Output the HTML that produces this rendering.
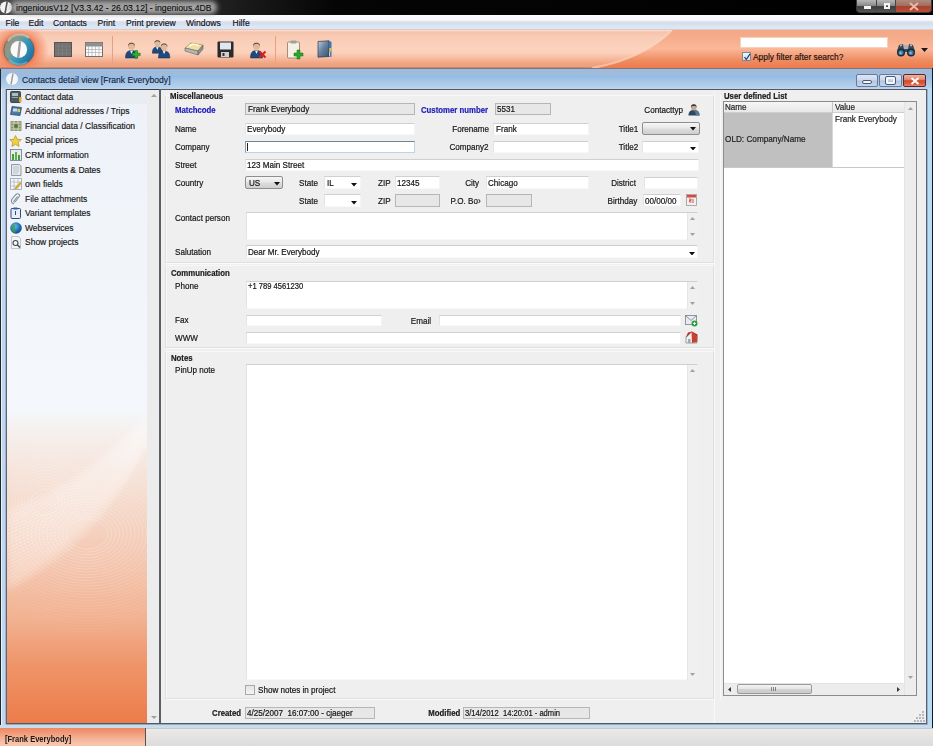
<!DOCTYPE html>
<html><head><meta charset="utf-8">
<style>
*{margin:0;padding:0;box-sizing:border-box}
html,body{width:933px;height:746px;overflow:hidden;background:#efefef}
body{position:relative;font-family:"Liberation Sans",sans-serif;font-size:8.5px;color:#222}
.a{position:absolute}
.t{position:absolute;white-space:nowrap;line-height:10px}
#title{left:0;top:0;width:933px;height:15px;background:linear-gradient(90deg,#4a4a4a 0%,#3a3a3a 15%,#1a1a1a 26%,#050505 36%,#000 100%)}
#menu{left:0;top:15px;width:933px;height:15px;background:linear-gradient(180deg,#fbfcfe 0%,#f6f8fc 35%,#d8e0ec 45%,#d6dfeb 62%,#dae6f6 72%,#dde9fa 100%)}
#tb{left:0;top:29px;width:933px;height:40px;background:linear-gradient(180deg,#c9aeae 0px,#f9e2d9 1px,#f6c3ab 3px,#f9ccb6 8px,#fcd3be 20px,#fbd0ba 24px,#f6b89b 30px,#f0a27e 35px,#f09f7b 38px,#8f7575 39px)}
#mdi{left:0;top:68px;width:933px;height:660px;background:#c2d6f0;border-top:1px solid #7c7788}
#mdit{left:0;top:69px;width:933px;height:20px;background:linear-gradient(180deg,#a2bad8 0%,#9ebbdc 25%,#93bde6 40%,#a8c6e4 60%,#b3cfec 90%,#c3d8ef 100%)}
#sb{left:6px;top:89px;width:155px;height:635px;border-left-color:#5a6878 !important;background:linear-gradient(180deg,#eef2f8 0%,#f4f7fb 50.5%,#f6eeea 55%,#f5dbcd 64.7%,#f4c8b2 74%,#f2b190 83.6%,#ef9468 91%,#ec7c4a 100%);border:1px solid #3a3f4a;border-right:none}
#sbs{left:147px;top:90px;width:12px;height:633px;background:#ececec}
#div{left:159px;top:89px;width:2px;height:635px;background:#5b5f66}
#main{left:161px;top:89px;width:766px;height:635px;background:#efefef;border-top:1px solid #50586a}
#taskbar{left:0;top:728px;width:933px;height:18px;background:linear-gradient(180deg,#90a0b0 0px,#f0f0f4 1px,#eae8e6 2px,#dcdcdc 100%)}
#task1{left:0;top:728px;width:146px;height:18px;background:linear-gradient(180deg,#ee8a62 0%,#f09878 25%,#f4ac8e 50%,#f8c0a6 80%,#f9c6ae 100%);border-right:1px solid #5a5050}
.lbl{color:#2a2a2a}
.blu{color:#1c22c8;font-weight:bold}
.b{font-weight:bold}
.fld{position:absolute;background:#fff;border-top:1px solid #d0d0d0;border-left:1px solid #e4e4e4;border-right:1px solid #f4f4f4;border-bottom:1px solid #f8f8f8}
.ro{position:absolute;background:#e7e7e7;border:1px solid #b6b6b6}
.grp{position:absolute;border:1px solid #dedede;border-top-color:#f8f8f8;box-shadow:1px 1px 0 #fcfcfc,inset 1px 0 0 #f8f8f8}
.foc{position:absolute;background:#fff;border:1px solid #bcd4e8;border-top-color:#6e8498;border-left-color:#8aa0b4}
.sel{position:absolute;border:1px solid #8e8e8e;border-radius:2px;background:linear-gradient(180deg,#f6f6f6 0%,#e8e8e8 45%,#dcdcdc 55%,#cfcfcf 100%)}
</style></head><body>
<div id="title" class="a"></div>
<div id="menu" class="a"></div>
<div id="tb" class="a"></div>

<!-- title bar content -->
<svg class="a" style="left:0;top:1px" width="14" height="13" viewBox="0 0 14 13"><ellipse cx="6" cy="6.5" rx="6" ry="6" fill="#f4f4f4"/><path d="M7.2 0.5 L5 12.5" stroke="#555" stroke-width="1.6"/></svg>
<div class="a" style="left:11px;top:1px;width:206px;height:13px;background:#a4a4a4;filter:blur(2.5px);border-radius:6px"></div>
<div class="t" style="left:16px;top:3px;font-size:8.7px;color:#0a0a0a;-webkit-text-stroke:0.1px #0a0a0a">ingeniousV12 [V3.3.42 - 26.03.12] - ingenious.4DB</div>
<div class="a" style="left:856px;top:0;width:76px;height:13px;border:1px solid #3a3a3a;border-top:none;border-radius:0 0 4px 4px;overflow:hidden;background:#222">
  <div class="a" style="left:0;top:0;width:20px;height:12px;background:linear-gradient(180deg,#b8b8b8 0%,#8c8c8c 45%,#3c3c3c 55%,#555 100%);border-right:1px solid #444"></div>
  <div class="a" style="left:20px;top:0;width:19px;height:12px;background:linear-gradient(180deg,#b8b8b8 0%,#8c8c8c 45%,#3c3c3c 55%,#555 100%);border-right:1px solid #444"></div>
  <div class="a" style="left:39px;top:0;width:37px;height:12px;background:linear-gradient(180deg,#b08a80 0%,#a07060 45%,#a8402c 55%,#b85038 100%)"></div>
  <div class="a" style="left:7px;top:6px;width:7px;height:3px;background:#f4f4f4"></div>
  <div class="a" style="left:27px;top:3px;width:6px;height:6px;border:2px solid #f4f4f4"></div>
  <svg class="a" style="left:52px;top:2px" width="10" height="9"><path d="M1 1 L9 8 M9 1 L1 8" stroke="#e8b8a8" stroke-width="2"/></svg>
</div>
<!-- menu -->
<div class="t" style="left:5.5px;top:18px;font-size:8.6px;color:#101018;-webkit-text-stroke:0.15px #101018">File</div>
<div class="t" style="left:28.5px;top:18px;font-size:8.6px;color:#101018;-webkit-text-stroke:0.15px #101018">Edit</div>
<div class="t" style="left:53px;top:18px;font-size:8.6px;color:#101018;-webkit-text-stroke:0.15px #101018">Contacts</div>
<div class="t" style="left:97.5px;top:18px;font-size:8.6px;color:#101018;-webkit-text-stroke:0.15px #101018">Print</div>
<div class="t" style="left:126px;top:18px;font-size:8.6px;color:#101018;-webkit-text-stroke:0.15px #101018">Print preview</div>
<div class="t" style="left:186px;top:18px;font-size:8.6px;color:#101018;-webkit-text-stroke:0.15px #101018">Windows</div>
<div class="t" style="left:232.5px;top:18px;font-size:8.6px;color:#101018;-webkit-text-stroke:0.15px #101018">Hilfe</div>
<!-- toolbar -->
<div class="a" style="left:0;top:30px;width:80px;height:38px;background:radial-gradient(ellipse 30px 26px at 19px 20px,rgba(238,112,70,0.95) 0%,rgba(240,125,85,0.85) 55%,rgba(246,170,135,0.0) 100%)"></div>
<svg class="a" style="left:0;top:30px" width="40" height="38" viewBox="0 0 40 38">
  <defs>
    <linearGradient id="lg1" x1="0" y1="0.2" x2="1" y2="0.8"><stop offset="0" stop-color="#9a8a78"/><stop offset="0.3" stop-color="#8a9a8c"/><stop offset="0.55" stop-color="#3a9ab8"/><stop offset="1" stop-color="#1a68a0"/></linearGradient>
    <radialGradient id="rg1" cx="0.5" cy="0.5" r="0.5"><stop offset="0.75" stop-color="#e66a3c"/><stop offset="1" stop-color="#ee8a60" stop-opacity="0"/></radialGradient>
  </defs>
  <circle cx="19" cy="20" r="19" fill="url(#rg1)"/>
  <circle cx="19" cy="20" r="15.2" fill="url(#lg1)" stroke="#4a6070" stroke-width="0.6"/>
  <path d="M8 11 A14 14 0 0 1 29 8" stroke="#d0ece0" stroke-width="2.2" fill="none" opacity="0.55"/>
  <path d="M9 30 A14 14 0 0 0 27 32" stroke="#80d0e8" stroke-width="2" fill="none" opacity="0.5"/>
  <ellipse cx="18.8" cy="19.5" rx="8.3" ry="8.4" fill="#fafafa"/>
  <path d="M20 11.5 L18.2 27.8" stroke="#a0a0a0" stroke-width="2.4"/>
</svg>
<svg class="a" style="left:0;top:30px" width="933" height="38" viewBox="0 0 933 38">
<defs><linearGradient id="sw" x1="0" y1="0" x2="0" y2="1">
<stop offset="0" stop-color="#f3a886"/><stop offset="0.18" stop-color="#f5ac8a"/><stop offset="0.5" stop-color="#fab898"/><stop offset="0.62" stop-color="#f6a682"/><stop offset="0.8" stop-color="#ee8c60"/><stop offset="1" stop-color="#ee7a4c"/></linearGradient>
<linearGradient id="sw2" x1="0" y1="0" x2="1" y2="0"><stop offset="0" stop-color="#fff" stop-opacity="0"/><stop offset="1" stop-color="#fff" stop-opacity="0.35"/></linearGradient></defs>
<path d="M588 38 C625 33 655 18 672 0 L933 0 L933 38 Z" fill="url(#sw)"/>
<path d="M592 38 C628 32 656 17 672 0" stroke="#fbd6c4" stroke-width="2" fill="none" opacity="0.7"/>
</svg>
<!-- grid icons -->
<svg class="a" style="left:54px;top:42px" width="18" height="15" viewBox="0 0 18 15">
  <rect x="0.5" y="0.5" width="17" height="14" fill="#727272" stroke="#555"/>
  <path d="M1 4.5H17M1 8H17M1 11.5H17M4.5 1V14M8.5 1V14M12.5 1V14" stroke="#7f7f7f" stroke-width="0.7"/>
</svg>
<svg class="a" style="left:85px;top:42px" width="18" height="15" viewBox="0 0 18 15">
  <rect x="0.5" y="0.5" width="17" height="14" fill="#fafafa" stroke="#707070"/>
  <rect x="0.5" y="0.5" width="17" height="4" fill="#909090"/>
  <path d="M1 7.5H17M1 10.5H17M3.5 4V14M7 4V14M10.5 4V14M14 4V14" stroke="#a8a8a8" stroke-width="0.6"/>
</svg>
<div class="a" style="left:112px;top:36px;width:1px;height:27px;background:#e6a084"></div>
<div class="a" style="left:275px;top:36px;width:1px;height:27px;background:#e6a084"></div>
<!-- person add -->
<svg class="a" style="left:124px;top:39px" width="18" height="20" viewBox="0 0 18 20"><g transform="translate(0 1) scale(1.0)">
  <path d="M1.5 18 C1.5 12.5 3.5 10.5 7.5 10.5 C11.5 10.5 13.5 12.5 13.5 18Z" fill="#1e4a7e" stroke="#10284a" stroke-width="0.5"/>
  <path d="M6 10.5 L7.5 14 L9 10.5Z" fill="#e8eef4"/>
  <ellipse cx="7.5" cy="6" rx="3.4" ry="3.8" fill="#e2b896"/>
  <path d="M4 6.5 C3.4 1.5 11.6 1.5 11 6.5 C10.5 4.2 8.5 3.8 7.5 3.8 C6.5 3.8 4.6 4.2 4 6.5Z" fill="#4a4440"/>
</g><path d="M11 11.5h2.6v2.6h2.6v2.6h-2.6v2.6h-2.6v-2.6h-2.6v-2.6h2.6z" fill="#30b030" stroke="#1a6a1a" stroke-width="0.5"/></svg>
<!-- persons -->
<svg class="a" style="left:152px;top:39px" width="20" height="20" viewBox="0 0 20 20"><g transform="translate(-1 -1) scale(0.85)">
  <path d="M1.5 18 C1.5 12.5 3.5 10.5 7.5 10.5 C11.5 10.5 13.5 12.5 13.5 18Z" fill="#1e4a7e" stroke="#10284a" stroke-width="0.5"/>
  <path d="M6 10.5 L7.5 14 L9 10.5Z" fill="#e8eef4"/>
  <ellipse cx="7.5" cy="6" rx="3.4" ry="3.8" fill="#e2b896"/>
  <path d="M4 6.5 C3.4 1.5 11.6 1.5 11 6.5 C10.5 4.2 8.5 3.8 7.5 3.8 C6.5 3.8 4.6 4.2 4 6.5Z" fill="#4a4440"/>
</g><g transform="translate(5 2) scale(0.95)">
  <path d="M1.5 18 C1.5 12.5 3.5 10.5 7.5 10.5 C11.5 10.5 13.5 12.5 13.5 18Z" fill="#1e4a7e" stroke="#10284a" stroke-width="0.5"/>
  <path d="M6 10.5 L7.5 14 L9 10.5Z" fill="#e8eef4"/>
  <ellipse cx="7.5" cy="6" rx="3.4" ry="3.8" fill="#e2b896"/>
  <path d="M4 6.5 C3.4 1.5 11.6 1.5 11 6.5 C10.5 4.2 8.5 3.8 7.5 3.8 C6.5 3.8 4.6 4.2 4 6.5Z" fill="#4a4440"/>
</g></svg>
<!-- tray -->
<svg class="a" style="left:184px;top:41px" width="20" height="15" viewBox="0 0 20 15">
  <path d="M1 7 L7 2 L19 4 L14 10Z" fill="#f0e0a0" stroke="#8a8060" stroke-width="0.6"/>
  <path d="M1 7 L14 10 L14 14 L1 10Z" fill="#b8b8b0" stroke="#606060" stroke-width="0.6"/>
  <path d="M14 10 L19 4 L19 8 L14 14Z" fill="#909090" stroke="#606060" stroke-width="0.6"/>
  <path d="M5 5 L9 3 L15 4.5" stroke="#fff8d8" stroke-width="1.5" fill="none"/>
</svg>
<!-- floppy -->
<svg class="a" style="left:217px;top:41px" width="17" height="17" viewBox="0 0 17 17">
  <rect x="0.5" y="0.5" width="16" height="16" rx="1" fill="#2a2a2a"/>
  <rect x="3" y="1.5" width="11" height="7" fill="#dfe8f0"/>
  <rect x="4" y="11" width="8" height="5" fill="#d0d0d0"/>
  <rect x="5.5" y="12" width="2" height="3" fill="#333"/>
</svg>
<!-- person delete -->
<svg class="a" style="left:250px;top:39px" width="17" height="20" viewBox="0 0 17 20"><g transform="translate(-1 1) scale(1.0)">
  <path d="M1.5 18 C1.5 12.5 3.5 10.5 7.5 10.5 C11.5 10.5 13.5 12.5 13.5 18Z" fill="#1e4a7e" stroke="#10284a" stroke-width="0.5"/>
  <path d="M6 10.5 L7.5 14 L9 10.5Z" fill="#e8eef4"/>
  <ellipse cx="7.5" cy="6" rx="3.4" ry="3.8" fill="#e2b896"/>
  <path d="M4 6.5 C3.4 1.5 11.6 1.5 11 6.5 C10.5 4.2 8.5 3.8 7.5 3.8 C6.5 3.8 4.6 4.2 4 6.5Z" fill="#4a4440"/>
</g><path d="M9.5 12.5 L15.5 18.5 M15.5 12.5 L9.5 18.5" stroke="#d82020" stroke-width="2.2"/></svg>
<!-- clipboard add -->
<svg class="a" style="left:286px;top:39px" width="18" height="21" viewBox="0 0 18 21">
  <rect x="1.5" y="3" width="12" height="16" rx="1" fill="#f4f0e4" stroke="#8a7a60" stroke-width="0.8"/>
  <rect x="4.5" y="1.5" width="6" height="3" rx="1" fill="#a0a0a0"/>
  <path d="M11 11h3v3h3v3h-3v3h-3v-3h-3v-3h3z" fill="#2aa82a" stroke="#1a6a1a" stroke-width="0.5"/>
</svg>
<!-- book -->
<svg class="a" style="left:317px;top:40px" width="16" height="18" viewBox="0 0 16 18">
  <defs><linearGradient id="bk" x1="0" y1="0" x2="1" y2="1"><stop offset="0" stop-color="#c0d0e0"/><stop offset="0.45" stop-color="#6a84a0"/><stop offset="1" stop-color="#34506c"/></linearGradient></defs>
  <path d="M1 1.5 L12 0.8 L12 16.5 L1 17.2Z" fill="url(#bk)" stroke="#2a3444" stroke-width="0.7"/>
  <path d="M12 0.8 L14.5 2 L14.5 17 L12 16.5Z" fill="#3a78a8"/>
  <rect x="12.3" y="8" width="2" height="3.5" fill="#e8c050"/>
  <path d="M12.6 11.5 L12.6 16" stroke="#f0f0f0" stroke-width="0.8"/>
</svg>
<!-- search -->
<div class="a" style="left:740px;top:37px;width:148px;height:11px;background:#fff;border:1px solid #f6d0bc"></div>
<div class="a" style="left:742px;top:52px;width:9px;height:9px;background:linear-gradient(180deg,#f4f4f4,#dcdcdc);border:1px solid #7a8a9a"></div>
<svg class="a" style="left:743px;top:53px" width="8" height="8"><path d="M1.5 4 L3.3 6.5 L7 0.8" stroke="#1a3a8a" stroke-width="1.2" fill="none"/></svg>
<div class="t" style="left:753px;top:52px;font-size:8.4px;color:#111;-webkit-text-stroke:0.15px #111">Apply filter after search?</div>
<svg class="a" style="left:896px;top:43px" width="20" height="14" viewBox="0 0 20 14">
  <path d="M3 2 L7 1 L8 6 L12 6 L13 1 L17 2 L19 8 L12 9 L8 9 L1 8Z" fill="#3a4a5a"/>
  <rect x="8" y="2" width="4" height="4" fill="#a8b4bc"/><path d="M4 3 L6 2 M14 2 L16 3" stroke="#e0e0e0" stroke-width="1"/>
  <circle cx="5" cy="9.5" r="4" fill="#1a2a3a"/><circle cx="5" cy="9.5" r="2.6" fill="#3a7a9c"/><circle cx="4.5" cy="10" r="1.2" fill="#8ab8d8"/>
  <circle cx="15" cy="9.5" r="4" fill="#1a2a3a"/><circle cx="15" cy="9.5" r="2.6" fill="#3a7a9c"/><circle cx="14.5" cy="10" r="1.2" fill="#8ab8d8"/>
</svg>
<svg class="a" style="left:921px;top:48px" width="7" height="4"><path d="M0 0H7L3.5 4Z" fill="#1a1a1a"/></svg>
<div id="mdi" class="a"></div>
<div id="mdit" class="a"></div>
<div class="a" style="left:0;top:69px;width:1px;height:659px;background:#1e2a2a"></div><div class="a" style="left:1px;top:89px;width:1px;height:639px;background:#e4f4fa"></div><div class="a" style="left:5px;top:89px;width:1px;height:635px;background:#a0b0d0"></div>

<!-- MDI title -->
<svg class="a" style="left:5px;top:72px" width="14" height="14" viewBox="0 0 14 14"><circle cx="7" cy="7" r="6" fill="#f4f6f8"/><path d="M8 1.5 L6 12.5" stroke="#9a9a9a" stroke-width="1.4"/></svg>
<div class="t" style="left:22px;top:75px;font-size:8.6px;color:#14203a;-webkit-text-stroke:0.12px #14203a">Contacts detail view [Frank Everybody]</div>
<div class="a" style="left:856px;top:74px;width:22px;height:13px;border:1px solid #6a7a94;border-radius:2px;background:linear-gradient(180deg,#dce6f4 0%,#ccd8ee 45%,#b4c6e2 55%,#c4d6ee 100%)"></div>
<div class="a" style="left:862px;top:80px;width:10px;height:4px;background:#f4f6fa;border:1px solid #4a5a74;border-radius:2px"></div>
<div class="a" style="left:879px;top:74px;width:23px;height:13px;border:1px solid #6a7a94;border-radius:2px;background:linear-gradient(180deg,#dce6f4 0%,#ccd8ee 45%,#b4c6e2 55%,#c4d6ee 100%)"></div>
<div class="a" style="left:886px;top:77px;width:9px;height:7px;border:2px solid #f4f6fa;outline:1px solid #4a5a74;border-radius:1px"></div>
<div class="a" style="left:903px;top:74px;width:23px;height:13px;border:1px solid #5a2a2a;border-radius:2px;background:linear-gradient(180deg,#f0b0a0 0%,#e08a74 40%,#d04a28 52%,#d85a3a 75%,#e8806a 100%)"></div>
<svg class="a" style="left:910px;top:76.5px" width="10" height="8"><path d="M1.5 1 L8.5 7 M8.5 1 L1.5 7" stroke="#fff" stroke-width="1.8"/></svg>
<div id="sb" class="a"></div>
<svg class="a" style="left:7px;top:380px" width="140" height="343" viewBox="0 0 140 343"><defs><filter id="bl"><feGaussianBlur stdDeviation="4"/></filter></defs><path d="M140 35 C100 80 60 110 0 130 L0 210 C50 180 100 140 140 65Z" fill="#ffffff" opacity="0.28" filter="url(#bl)"/><g fill="none" stroke="#ffffff" stroke-width="0.7"><path d="M0 130.0 C60 110.0 100 80.0 140 35.0" opacity="0.260"/><path d="M0 133.5 C60 113.0 100 82.6 140 36.3" opacity="0.275"/><path d="M0 137.0 C60 116.1 100 85.2 140 37.6" opacity="0.290"/><path d="M0 140.4 C60 119.1 100 87.8 140 38.9" opacity="0.306"/><path d="M0 143.9 C60 122.2 100 90.4 140 40.2" opacity="0.321"/><path d="M0 147.4 C60 125.2 100 93.0 140 41.5" opacity="0.336"/><path d="M0 150.9 C60 128.3 100 95.7 140 42.8" opacity="0.351"/><path d="M0 154.3 C60 131.3 100 98.3 140 44.1" opacity="0.367"/><path d="M0 157.8 C60 134.3 100 100.9 140 45.4" opacity="0.382"/><path d="M0 161.3 C60 137.4 100 103.5 140 46.7" opacity="0.397"/><path d="M0 164.8 C60 140.4 100 106.1 140 48.0" opacity="0.388"/><path d="M0 168.3 C60 143.5 100 108.7 140 49.3" opacity="0.373"/><path d="M0 171.7 C60 146.5 100 111.3 140 50.7" opacity="0.357"/><path d="M0 175.2 C60 149.6 100 113.9 140 52.0" opacity="0.342"/><path d="M0 178.7 C60 152.6 100 116.5 140 53.3" opacity="0.327"/><path d="M0 182.2 C60 155.7 100 119.1 140 54.6" opacity="0.312"/><path d="M0 185.7 C60 158.7 100 121.7 140 55.9" opacity="0.297"/><path d="M0 189.1 C60 161.7 100 124.3 140 57.2" opacity="0.281"/><path d="M0 192.6 C60 164.8 100 127.0 140 58.5" opacity="0.266"/><path d="M0 196.1 C60 167.8 100 129.6 140 59.8" opacity="0.251"/><path d="M0 199.6 C60 170.9 100 132.2 140 61.1" opacity="0.236"/><path d="M0 203.0 C60 173.9 100 134.8 140 62.4" opacity="0.220"/><path d="M0 206.5 C60 177.0 100 137.4 140 63.7" opacity="0.205"/><path d="M0 210.0 C60 180.0 100 140.0 140 65.0" opacity="0.190"/><ellipse cx="80" cy="154" rx="20.8" ry="15.2" opacity="0.340"/><ellipse cx="80" cy="154" rx="24.7" ry="18.1" opacity="0.330"/><ellipse cx="80" cy="154" rx="28.6" ry="20.9" opacity="0.320"/><ellipse cx="80" cy="154" rx="32.5" ry="23.8" opacity="0.310"/><ellipse cx="80" cy="154" rx="36.4" ry="26.6" opacity="0.300"/><ellipse cx="80" cy="154" rx="40.3" ry="29.4" opacity="0.290"/><ellipse cx="80" cy="154" rx="44.2" ry="32.3" opacity="0.280"/><ellipse cx="80" cy="154" rx="48.1" ry="35.1" opacity="0.270"/><ellipse cx="80" cy="154" rx="52.0" ry="38.0" opacity="0.260"/><ellipse cx="80" cy="154" rx="55.9" ry="40.9" opacity="0.250"/><ellipse cx="80" cy="154" rx="59.8" ry="43.7" opacity="0.240"/><ellipse cx="80" cy="154" rx="63.7" ry="46.5" opacity="0.230"/><ellipse cx="80" cy="154" rx="67.6" ry="49.4" opacity="0.220"/><ellipse cx="80" cy="154" rx="71.5" ry="52.2" opacity="0.210"/><ellipse cx="80" cy="154" rx="75.4" ry="55.1" opacity="0.200"/><ellipse cx="80" cy="154" rx="79.3" ry="57.9" opacity="0.190"/><ellipse cx="80" cy="154" rx="83.2" ry="60.8" opacity="0.180"/><ellipse cx="80" cy="154" rx="87.1" ry="63.6" opacity="0.170"/><ellipse cx="80" cy="154" rx="91.0" ry="66.5" opacity="0.160"/><ellipse cx="80" cy="154" rx="94.9" ry="69.3" opacity="0.150"/><ellipse cx="80" cy="154" rx="98.8" ry="72.2" opacity="0.140"/><ellipse cx="80" cy="154" rx="102.7" ry="75.0" opacity="0.130"/><ellipse cx="80" cy="154" rx="106.6" ry="77.9" opacity="0.120"/><ellipse cx="80" cy="154" rx="110.5" ry="80.8" opacity="0.110"/><ellipse cx="80" cy="154" rx="114.4" ry="83.6" opacity="0.100"/><ellipse cx="80" cy="154" rx="118.3" ry="86.5" opacity="0.090"/><ellipse cx="80" cy="154" rx="122.2" ry="89.3" opacity="0.080"/><ellipse cx="80" cy="154" rx="126.1" ry="92.1" opacity="0.070"/><ellipse cx="80" cy="154" rx="130.0" ry="95.0" opacity="0.060"/><ellipse cx="80" cy="154" rx="133.9" ry="97.8" opacity="0.050"/><ellipse cx="38" cy="122" rx="14.0" ry="13.3" opacity="0.300"/><ellipse cx="38" cy="122" rx="17.2" ry="16.3" opacity="0.282"/><ellipse cx="38" cy="122" rx="20.4" ry="19.4" opacity="0.264"/><ellipse cx="38" cy="122" rx="23.6" ry="22.4" opacity="0.246"/><ellipse cx="38" cy="122" rx="26.8" ry="25.5" opacity="0.228"/><ellipse cx="38" cy="122" rx="30.0" ry="28.5" opacity="0.210"/><ellipse cx="38" cy="122" rx="33.2" ry="31.5" opacity="0.192"/><ellipse cx="38" cy="122" rx="36.4" ry="34.6" opacity="0.174"/><ellipse cx="38" cy="122" rx="39.6" ry="37.6" opacity="0.156"/><ellipse cx="38" cy="122" rx="42.8" ry="40.7" opacity="0.138"/><ellipse cx="38" cy="122" rx="46.0" ry="43.7" opacity="0.120"/><ellipse cx="38" cy="122" rx="49.2" ry="46.7" opacity="0.102"/><ellipse cx="38" cy="122" rx="52.4" ry="49.8" opacity="0.084"/><ellipse cx="38" cy="122" rx="55.6" ry="52.8" opacity="0.066"/></g></svg>
<div id="sbs" class="a"></div>
<div class="a" style="left:7px;top:90px;width:140px;height:14px;background:#e9ecf0"></div>
<div class="t" style="left:25px;top:91.8px;font-size:8.5px;color:#141414;-webkit-text-stroke:0.15px #141414">Contact data</div>
<div class="t" style="left:25px;top:106.3px;font-size:8.5px;color:#141414;-webkit-text-stroke:0.15px #141414">Additional addresses / Trips</div>
<div class="t" style="left:25px;top:120.9px;font-size:8.5px;color:#141414;-webkit-text-stroke:0.15px #141414">Financial data / Classification</div>
<div class="t" style="left:25px;top:135.4px;font-size:8.5px;color:#141414;-webkit-text-stroke:0.15px #141414">Special prices</div>
<div class="t" style="left:25px;top:150.0px;font-size:8.5px;color:#141414;-webkit-text-stroke:0.15px #141414">CRM information</div>
<div class="t" style="left:25px;top:164.6px;font-size:8.5px;color:#141414;-webkit-text-stroke:0.15px #141414">Documents &amp; Dates</div>
<div class="t" style="left:25px;top:179.1px;font-size:8.5px;color:#141414;-webkit-text-stroke:0.15px #141414">own fields</div>
<div class="t" style="left:25px;top:193.7px;font-size:8.5px;color:#141414;-webkit-text-stroke:0.15px #141414">File attachments</div>
<div class="t" style="left:25px;top:208.2px;font-size:8.5px;color:#141414;-webkit-text-stroke:0.15px #141414">Variant templates</div>
<div class="t" style="left:25px;top:222.8px;font-size:8.5px;color:#141414;-webkit-text-stroke:0.15px #141414">Webservices</div>
<div class="t" style="left:25px;top:237.3px;font-size:8.5px;color:#141414;-webkit-text-stroke:0.15px #141414">Show projects</div>

<svg class="a" style="left:10px;top:91px" width="12" height="12" viewBox="0 0 12 12"><rect x="0.5" y="0.5" width="10" height="11" rx="1" fill="#4a5a60" stroke="#2a3038" stroke-width="0.8"/><rect x="2" y="2" width="6" height="3" fill="#a8c0c0"/><rect x="2" y="6" width="6" height="1" fill="#90a8a8"/><rect x="9" y="6" width="2.5" height="5" fill="#d8b030"/></svg>
<svg class="a" style="left:10px;top:106px" width="12" height="10" viewBox="0 0 12 10"><path d="M2 0.5 L11.5 1.5 L10 9.5 L0.5 8.5Z" fill="#4a7aaa" stroke="#24405a" stroke-width="0.7"/><rect x="3" y="2.5" width="4" height="3" fill="#c8dcf0"/><rect x="7.5" y="3" width="2.5" height="3" fill="#d8d060"/></svg>
<svg class="a" style="left:10px;top:120px" width="12" height="12" viewBox="0 0 12 12"><rect x="0.5" y="1" width="11" height="10" fill="#8a9a70"/><path d="M1 3h10M1 6h10M1 9h10M4 1v10M8 1v10" stroke="#c8d0b0" stroke-width="1"/><circle cx="6" cy="6" r="2" fill="#607040"/></svg>
<svg class="a" style="left:9px;top:135px" width="13" height="12" viewBox="0 0 13 12"><path d="M6.5 0.5 L8.2 4.3 L12.3 4.6 L9.2 7.3 L10.1 11.4 L6.5 9.3 L2.9 11.4 L3.8 7.3 L0.7 4.6 L4.8 4.3Z" fill="#f0d040" stroke="#b09020" stroke-width="0.7"/></svg>
<svg class="a" style="left:10px;top:149px" width="12" height="12" viewBox="0 0 12 12"><rect x="0.5" y="0.5" width="11" height="11" fill="#e8ece8" stroke="#6a7a8a" stroke-width="0.8"/><rect x="2" y="5" width="2" height="6" fill="#40a040"/><rect x="5" y="3" width="2" height="8" fill="#60b050"/><rect x="8" y="6" width="2" height="5" fill="#40a040"/></svg>
<svg class="a" style="left:10px;top:164px" width="12" height="12" viewBox="0 0 12 12"><path d="M1.5 0.5h8l1.5 1.5v9.5h-9.5z" fill="#e4e8ec" stroke="#7a8590" stroke-width="0.8"/><path d="M3 3h6M3 5h6M3 7h6M3 9h5" stroke="#a0a8b0" stroke-width="0.6"/></svg>
<svg class="a" style="left:10px;top:178px" width="12" height="12" viewBox="0 0 12 12"><rect x="0.5" y="0.5" width="11" height="11" fill="#f4f6f8" stroke="#8a9aaa" stroke-width="0.7"/><path d="M0.5 4h11M0.5 8h11M4 0.5v11M8 0.5v11" stroke="#9aaaba" stroke-width="0.6"/><path d="M5 11 L11 4.5" stroke="#d8a820" stroke-width="2"/></svg>
<svg class="a" style="left:10px;top:193px" width="12" height="12" viewBox="0 0 12 12"><path d="M4 11 C1 10 1 8 2 6 L6 1.5 C7.5 0 10 1 9.5 3 L5.5 8.5 C4.8 9.5 3.5 9 4 8 L7.5 3.5" stroke="#8090a0" stroke-width="1.1" fill="none"/></svg>
<svg class="a" style="left:10px;top:207px" width="12" height="12" viewBox="0 0 12 12"><rect x="1" y="1.5" width="9.5" height="10" rx="1" fill="#e8eef8" stroke="#2a4a8a" stroke-width="1"/><rect x="3.5" y="0.5" width="4" height="2" fill="#3a5a9a"/><path d="M5.5 4v4" stroke="#2a4a8a" stroke-width="1"/></svg>
<svg class="a" style="left:10px;top:222px" width="12" height="12" viewBox="0 0 12 12"><defs><radialGradient id="gl" cx="0.4" cy="0.35" r="0.7"><stop offset="0" stop-color="#70c0f0"/><stop offset="0.6" stop-color="#2070b8"/><stop offset="1" stop-color="#104880"/></radialGradient></defs><circle cx="6" cy="6" r="5.8" fill="url(#gl)"/><path d="M3 3 C5 2 6 4 5 6 C4 8 6 9 5 11 C3 10 1.5 8 1.5 6Z" fill="#48a040" opacity="0.85"/></svg>
<svg class="a" style="left:10px;top:236px" width="12" height="13" viewBox="0 0 12 13"><path d="M1.5 0.5h7l2 2v10h-9z" fill="#f4f4f4" stroke="#a8b0b8" stroke-width="0.7"/><circle cx="5.5" cy="7" r="2.5" fill="none" stroke="#404850" stroke-width="1.1"/><path d="M7.3 8.8 L10 11.5" stroke="#404850" stroke-width="1.5"/></svg>
<!-- sidebar scrollbar arrows -->
<svg class="a" style="left:150.5px;top:94px" width="6" height="3"><path d="M0 3H6L3 0Z" fill="#a0a0a0"/></svg>
<svg class="a" style="left:150.5px;top:716px" width="6" height="3"><path d="M0 0H6L3 3Z" fill="#a0a0a0"/></svg>
<div id="main" class="a"></div>
<div id="div" class="a"></div>
<div class="grp" style="left:165px;top:95px;width:549px;height:168px"></div>
<div class="grp" style="left:165px;top:265px;width:549px;height:83px"></div>
<div class="grp" style="left:165px;top:351px;width:549px;height:348px"></div>
<div class="a" style="left:714px;top:91px;width:1px;height:632px;background:#f8f8f8"></div>
<div class="a" style="left:720px;top:95px;width:1px;height:605px;background:#f8f8f8"></div>
<div class="t" style="top:91px;font-size:8.6px;color:#1a1a1a;-webkit-text-stroke:0.2px #1a1a1a;font-weight:bold;left:170.3px;transform:scaleX(0.905);transform-origin:0 0;">Miscellaneous</div>
<div class="t" style="top:268px;font-size:8.6px;color:#1a1a1a;-webkit-text-stroke:0.2px #1a1a1a;font-weight:bold;left:170.8px;transform:scaleX(0.905);transform-origin:0 0;">Communication</div>
<div class="t" style="top:353px;font-size:8.6px;color:#1a1a1a;-webkit-text-stroke:0.2px #1a1a1a;font-weight:bold;left:171.3px;transform:scaleX(0.905);transform-origin:0 0;">Notes</div>
<div class="t" style="top:91px;font-size:8.6px;color:#1a1a1a;-webkit-text-stroke:0.2px #1a1a1a;font-weight:bold;left:724.3px;transform:scaleX(0.905);transform-origin:0 0;">User defined List</div>
<div class="t" style="top:105px;font-size:8.6px;color:#1c1cb8;-webkit-text-stroke:0.2px #1c1cb8;font-weight:bold;left:175px;transform:scaleX(0.905);transform-origin:0 0;">Matchcode</div>
<div class="t" style="top:105px;font-size:8.6px;color:#1c1cb8;-webkit-text-stroke:0.2px #1c1cb8;font-weight:bold;left:420.7px;transform:scaleX(0.905);transform-origin:0 0;">Customer number</div>
<div class="t" style="top:124px;font-size:8.8px;color:#161616;-webkit-text-stroke:0.2px #161616;left:174.5px;transform:scaleX(0.920);transform-origin:0 0;">Name</div>
<div class="t" style="top:142px;font-size:8.8px;color:#161616;-webkit-text-stroke:0.2px #161616;left:174.5px;transform:scaleX(0.920);transform-origin:0 0;">Company</div>
<div class="t" style="top:160px;font-size:8.8px;color:#161616;-webkit-text-stroke:0.2px #161616;left:174.5px;transform:scaleX(0.920);transform-origin:0 0;">Street</div>
<div class="t" style="top:178px;font-size:8.8px;color:#161616;-webkit-text-stroke:0.2px #161616;left:174.5px;transform:scaleX(0.920);transform-origin:0 0;">Country</div>
<div class="t" style="top:178px;font-size:8.8px;color:#161616;-webkit-text-stroke:0.2px #161616;left:299px;transform:scaleX(0.920);transform-origin:0 0;">State</div>
<div class="t" style="top:196px;font-size:8.8px;color:#161616;-webkit-text-stroke:0.2px #161616;left:299px;transform:scaleX(0.920);transform-origin:0 0;">State</div>
<div class="t" style="top:178px;font-size:8.8px;color:#161616;-webkit-text-stroke:0.2px #161616;left:378px;transform:scaleX(0.920);transform-origin:0 0;">ZIP</div>
<div class="t" style="top:196px;font-size:8.8px;color:#161616;-webkit-text-stroke:0.2px #161616;left:378px;transform:scaleX(0.920);transform-origin:0 0;">ZIP</div>
<div class="t" style="top:178px;font-size:8.8px;color:#161616;-webkit-text-stroke:0.2px #161616;right:453.5px;transform:scaleX(0.920);transform-origin:100% 0;">City</div>
<div class="t" style="top:196px;font-size:8.8px;color:#161616;-webkit-text-stroke:0.2px #161616;right:452px;transform:scaleX(0.920);transform-origin:100% 0;">P.O. Bo&rsaquo;</div>
<div class="t" style="top:178px;font-size:8.8px;color:#161616;-webkit-text-stroke:0.2px #161616;right:297px;transform:scaleX(0.920);transform-origin:100% 0;">District</div>
<div class="t" style="top:196px;font-size:8.8px;color:#161616;-webkit-text-stroke:0.2px #161616;right:296px;transform:scaleX(0.920);transform-origin:100% 0;">Birthday</div>
<div class="t" style="top:124px;font-size:8.8px;color:#161616;-webkit-text-stroke:0.2px #161616;right:444px;transform:scaleX(0.920);transform-origin:100% 0;">Forename</div>
<div class="t" style="top:142px;font-size:8.8px;color:#161616;-webkit-text-stroke:0.2px #161616;right:444px;transform:scaleX(0.920);transform-origin:100% 0;">Company2</div>
<div class="t" style="top:124px;font-size:8.8px;color:#161616;-webkit-text-stroke:0.2px #161616;right:295px;transform:scaleX(0.920);transform-origin:100% 0;">Title1</div>
<div class="t" style="top:142px;font-size:8.8px;color:#161616;-webkit-text-stroke:0.2px #161616;right:295px;transform:scaleX(0.920);transform-origin:100% 0;">Title2</div>
<div class="t" style="top:105px;font-size:8.8px;color:#161616;-webkit-text-stroke:0.2px #161616;right:249.5px;transform:scaleX(0.920);transform-origin:100% 0;">Contacttyp</div>
<div class="t" style="top:213px;font-size:8.8px;color:#161616;-webkit-text-stroke:0.2px #161616;left:174.5px;transform:scaleX(0.920);transform-origin:0 0;">Contact person</div>
<div class="t" style="top:247px;font-size:8.8px;color:#161616;-webkit-text-stroke:0.2px #161616;left:174.5px;transform:scaleX(0.920);transform-origin:0 0;">Salutation</div>
<div class="t" style="top:281px;font-size:8.8px;color:#161616;-webkit-text-stroke:0.2px #161616;left:174.5px;transform:scaleX(0.920);transform-origin:0 0;">Phone</div>
<div class="t" style="top:315px;font-size:8.8px;color:#161616;-webkit-text-stroke:0.2px #161616;left:174.5px;transform:scaleX(0.920);transform-origin:0 0;">Fax</div>
<div class="t" style="top:316px;font-size:8.8px;color:#161616;-webkit-text-stroke:0.2px #161616;right:502px;transform:scaleX(0.920);transform-origin:100% 0;">Email</div>
<div class="t" style="top:333px;font-size:8.8px;color:#161616;-webkit-text-stroke:0.2px #161616;left:174.5px;transform:scaleX(0.920);transform-origin:0 0;">WWW</div>
<div class="t" style="top:365px;font-size:8.8px;color:#161616;-webkit-text-stroke:0.2px #161616;left:174.5px;transform:scaleX(0.920);transform-origin:0 0;">PinUp note</div>
<div class="ro" style="left:245px;top:103px;width:170px;height:12px"></div>
<div class="ro" style="left:495px;top:103px;width:56px;height:12px"></div>
<div class="fld" style="left:245px;top:123px;width:170px;height:12px"></div>
<div class="foc" style="left:245px;top:141px;width:170px;height:12px"></div>
<div class="fld" style="left:493px;top:123px;width:96px;height:12px"></div>
<div class="fld" style="left:493px;top:141px;width:96px;height:12px"></div>
<div class="fld" style="left:245px;top:159px;width:454px;height:12px"></div>
<div class="fld" style="left:324px;top:176px;width:37px;height:13px"></div>
<div class="fld" style="left:395px;top:176px;width:45px;height:13px"></div>
<div class="fld" style="left:486px;top:176px;width:103px;height:13px"></div>
<div class="fld" style="left:644px;top:177px;width:54px;height:12px"></div>
<div class="fld" style="left:324px;top:194px;width:37px;height:13px"></div>
<div class="ro" style="left:395px;top:194px;width:45px;height:13px"></div>
<div class="ro" style="left:486px;top:194px;width:46px;height:13px"></div>
<div class="fld" style="left:643px;top:194px;width:38px;height:12px"></div>
<div class="fld" style="left:642px;top:141px;width:57px;height:12px"></div>
<div class="fld" style="left:246px;top:212px;width:452px;height:28px"></div>
<div class="fld" style="left:246px;top:245px;width:452px;height:13px"></div>
<div class="fld" style="left:246px;top:281px;width:452px;height:28px"></div>
<div class="fld" style="left:246px;top:315px;width:136px;height:11px"></div>
<div class="fld" style="left:439px;top:315px;width:242px;height:11px"></div>
<div class="fld" style="left:246px;top:332px;width:435px;height:12px"></div>
<div class="fld" style="left:246px;top:364px;width:452px;height:316px"></div>
<div class="ro" style="left:245px;top:707px;width:130px;height:12px"></div>
<div class="ro" style="left:463px;top:707px;width:127px;height:12px"></div>
<div class="sel" style="left:245px;top:176px;width:38px;height:13px"></div>
<div class="sel" style="left:642px;top:122px;width:58px;height:13px"></div>
<svg class="a" style="left:273.5px;top:182px" width="6" height="3.5"><path d="M0 0H6L3.0 3.5Z" fill="#111"/></svg>
<svg class="a" style="left:350.5px;top:183px" width="6" height="3.5"><path d="M0 0H6L3.0 3.5Z" fill="#111"/></svg>
<svg class="a" style="left:350.5px;top:201px" width="6" height="3.5"><path d="M0 0H6L3.0 3.5Z" fill="#111"/></svg>
<svg class="a" style="left:689.5px;top:127px" width="6" height="3.5"><path d="M0 0H6L3.0 3.5Z" fill="#111"/></svg>
<svg class="a" style="left:689.5px;top:146.5px" width="6" height="3.5"><path d="M0 0H6L3.0 3.5Z" fill="#111"/></svg>
<svg class="a" style="left:688.5px;top:251.5px" width="6" height="3.5"><path d="M0 0H6L3.0 3.5Z" fill="#111"/></svg>
<div class="a" style="left:687px;top:213px;width:11px;height:27px;background:#f0f0f0;border-left:1px solid #e6e6e6"></div>
<svg class="a" style="left:690px;top:217px" width="5" height="3"><path d="M0 3H5L2.5 0Z" fill="#a0a0a0"/></svg>
<svg class="a" style="left:690px;top:233px" width="5" height="3"><path d="M0 0H5L2.5 3Z" fill="#a0a0a0"/></svg>
<div class="a" style="left:687px;top:282px;width:11px;height:27px;background:#f0f0f0;border-left:1px solid #e6e6e6"></div>
<svg class="a" style="left:690px;top:286px" width="5" height="3"><path d="M0 3H5L2.5 0Z" fill="#a0a0a0"/></svg>
<svg class="a" style="left:690px;top:302px" width="5" height="3"><path d="M0 0H5L2.5 3Z" fill="#a0a0a0"/></svg>
<div class="a" style="left:687px;top:365px;width:11px;height:315px;background:#f0f0f0;border-left:1px solid #e6e6e6"></div>
<svg class="a" style="left:690px;top:369px" width="5" height="3"><path d="M0 3H5L2.5 0Z" fill="#a0a0a0"/></svg>
<svg class="a" style="left:690px;top:673px" width="5" height="3"><path d="M0 0H5L2.5 3Z" fill="#a0a0a0"/></svg>
<div class="t" style="top:104px;font-size:8.8px;color:#141414;-webkit-text-stroke:0.2px #141414;left:247.5px;transform:scaleX(0.920);transform-origin:0 0;">Frank Everybody</div>
<div class="t" style="top:104px;font-size:8.8px;color:#141414;-webkit-text-stroke:0.2px #141414;left:497px;transform:scaleX(0.920);transform-origin:0 0;">5531</div>
<div class="t" style="top:124px;font-size:8.8px;color:#141414;-webkit-text-stroke:0.2px #141414;left:247.3px;transform:scaleX(0.920);transform-origin:0 0;">Everybody</div>
<div class="t" style="top:124px;font-size:8.8px;color:#141414;-webkit-text-stroke:0.2px #141414;left:495.5px;transform:scaleX(0.920);transform-origin:0 0;">Frank</div>
<div class="t" style="top:160px;font-size:8.8px;color:#141414;-webkit-text-stroke:0.2px #141414;left:247.3px;transform:scaleX(0.920);transform-origin:0 0;">123 Main Street</div>
<div class="t" style="top:178px;font-size:8.8px;color:#141414;-webkit-text-stroke:0.2px #141414;left:248.7px;transform:scaleX(0.920);transform-origin:0 0;">US</div>
<div class="t" style="top:178px;font-size:8.8px;color:#141414;-webkit-text-stroke:0.2px #141414;left:326.5px;transform:scaleX(0.920);transform-origin:0 0;">IL</div>
<div class="t" style="top:178px;font-size:8.8px;color:#141414;-webkit-text-stroke:0.2px #141414;left:397px;transform:scaleX(0.920);transform-origin:0 0;">12345</div>
<div class="t" style="top:178px;font-size:8.8px;color:#141414;-webkit-text-stroke:0.2px #141414;left:488px;transform:scaleX(0.920);transform-origin:0 0;">Chicago</div>
<div class="t" style="top:196px;font-size:8.8px;color:#141414;-webkit-text-stroke:0.2px #141414;left:644.5px;transform:scaleX(0.920);transform-origin:0 0;">00/00/00</div>
<div class="t" style="top:247px;font-size:8.8px;color:#141414;-webkit-text-stroke:0.2px #141414;left:248px;transform:scaleX(0.920);transform-origin:0 0;">Dear Mr. Everybody</div>
<div class="t" style="top:281px;font-size:8.8px;color:#141414;-webkit-text-stroke:0.2px #141414;left:247.5px;transform:scaleX(0.864);transform-origin:0 0;">+1 789 4561230</div>
<div class="t" style="top:685px;font-size:8.8px;color:#141414;-webkit-text-stroke:0.2px #141414;left:257.7px;transform:scaleX(0.920);transform-origin:0 0;">Show notes in project</div>
<div class="t" style="top:708px;font-size:8.6px;color:#1a1a1a;-webkit-text-stroke:0.2px #1a1a1a;font-weight:bold;right:692.5px;transform:scaleX(0.905);transform-origin:100% 0;">Created</div>
<div class="t" style="top:708px;font-size:8.6px;color:#1a1a1a;-webkit-text-stroke:0.2px #1a1a1a;font-weight:bold;right:473px;transform:scaleX(0.905);transform-origin:100% 0;">Modified</div>
<div class="t" style="top:708px;font-size:8.8px;color:#141414;-webkit-text-stroke:0.2px #141414;left:247px;transform:scaleX(0.920);transform-origin:0 0;">4/25/2007&nbsp; 16:07:00 - cjaeger</div>
<div class="t" style="top:708px;font-size:8.8px;color:#141414;-webkit-text-stroke:0.2px #141414;left:465px;transform:scaleX(0.864);transform-origin:0 0;">3/14/2012&nbsp; 14:20:01 - admin</div>
<div class="a" style="left:247px;top:143px;width:1px;height:8px;background:#222"></div>
<div class="a" style="left:245px;top:685px;width:10px;height:10px;border:1px solid #a8a8a8;background:linear-gradient(180deg,#e4e4e4,#f4f4f4)"></div>
<div class="a" style="left:723px;top:101px;width:194px;height:595px;background:#fff;border:1px solid #8c8c8c"></div>
<div class="a" style="left:724px;top:102px;width:181px;height:11px;background:linear-gradient(180deg,#f6f6f6,#e8e8e8);border-bottom:1px solid #cfcfcf"></div>
<div class="a" style="left:832px;top:102px;width:1px;height:11px;background:#c4c4c4"></div>
<div class="a" style="left:724px;top:113px;width:108px;height:54px;background:#c0c0c0"></div>
<div class="a" style="left:832px;top:113px;width:1px;height:54px;background:#d8d8d8"></div>
<div class="a" style="left:724px;top:167px;width:181px;height:1px;background:#c8c8c8"></div>
<div class="t" style="top:102px;font-size:8.8px;color:#1e1e1e;-webkit-text-stroke:0.2px #1e1e1e;left:725px;transform:scaleX(0.920);transform-origin:0 0;">Name</div>
<div class="t" style="top:102px;font-size:8.8px;color:#1e1e1e;-webkit-text-stroke:0.2px #1e1e1e;left:834.6px;transform:scaleX(0.920);transform-origin:0 0;">Value</div>
<div class="t" style="top:114px;font-size:8.8px;color:#1e1e1e;-webkit-text-stroke:0.2px #1e1e1e;left:834.6px;transform:scaleX(0.932);transform-origin:0 0;">Frank Everybody</div>
<div class="t" style="top:134px;font-size:8.8px;color:#1e1e1e;-webkit-text-stroke:0.2px #1e1e1e;left:725px;transform:scaleX(0.932);transform-origin:0 0;">OLD: Company/Name</div>
<div class="a" style="left:904px;top:102px;width:12px;height:593px;background:#ededed;border-left:1px solid #e4e4e4"></div>
<svg class="a" style="left:908px;top:107px" width="5" height="3"><path d="M0 3H5L2.5 0Z" fill="#a0a0a0"/></svg>
<svg class="a" style="left:908px;top:676px" width="5" height="3"><path d="M0 0H5L2.5 3Z" fill="#a0a0a0"/></svg>
<div class="a" style="left:724px;top:683px;width:180px;height:12px;background:#ececec;border-top:1px solid #e2e2e2"></div>
<div class="a" style="left:737px;top:684px;width:75px;height:10px;border:1px solid #9a9a9a;border-radius:2px;background:linear-gradient(180deg,#f4f4f4 0%,#e4e4e4 50%,#d4d4d4 51%,#cacaca 100%)"></div>
<svg class="a" style="left:771px;top:687px" width="6" height="4"><path d="M0.5 0V4M2.5 0V4M4.5 0V4" stroke="#5a5a5a" stroke-width="0.7"/></svg>
<svg class="a" style="left:728px;top:687px" width="3" height="5"><path d="M3 0V5L0 2.5Z" fill="#3a3a3a"/></svg>
<svg class="a" style="left:897px;top:687px" width="3" height="5"><path d="M0 0V5L3 2.5Z" fill="#3a3a3a"/></svg>
<svg class="a" style="left:914px;top:711px" width="11" height="11"><g fill="#b8b8c0"><rect x="8" y="0" width="2" height="2"/><rect x="5" y="3" width="2" height="2"/><rect x="8" y="3" width="2" height="2"/><rect x="2" y="6" width="2" height="2"/><rect x="5" y="6" width="2" height="2"/><rect x="8" y="6" width="2" height="2"/><rect x="0" y="9" width="2" height="2"/><rect x="3" y="9" width="2" height="2"/><rect x="6" y="9" width="2" height="2"/><rect x="9" y="9" width="2" height="2"/></g></svg>
<div class="t" style="left:4.5px;top:734px;font-size:8.4px;font-weight:bold;color:#1a1a1a;z-index:5;transform:scaleX(0.9);transform-origin:0 0">[Frank Everybody]</div>
<svg class="a" style="left:688px;top:103px" width="12" height="13" viewBox="0 0 12 13">
<path d="M0.5 12.5 C0.5 8.5 2.5 7 6 7 C9.5 7 11.5 8.5 11.5 12.5Z" fill="#2a4a62"/>
<path d="M6 7 L8.5 12.5 L11.5 12.5 C11.5 9 10 7.5 8 7.2Z" fill="#5a7a90"/>
<ellipse cx="5.8" cy="4.2" rx="2.8" ry="3.2" fill="#c8a890"/><path d="M3 4.5 C2.5 0.2 9 0.2 8.6 4.5 C8 2.6 4 2.6 3 4.5Z" fill="#3a3a3a"/></svg>
<svg class="a" style="left:686px;top:194px" width="11" height="12" viewBox="0 0 11 12">
<rect x="0.5" y="0.5" width="10" height="11" fill="#f0f0f0" stroke="#9a9a9a" stroke-width="0.8"/>
<rect x="1" y="1" width="9" height="2.5" fill="#d84a3a"/><path d="M3 5h2v1.5h-1.5v1.5h2M7 5v4" stroke="#d04030" stroke-width="0.9" fill="none"/></svg>
<svg class="a" style="left:685px;top:314px" width="13" height="13" viewBox="0 0 13 13">
<rect x="0.5" y="1.5" width="11" height="9" fill="#e8ecf0" stroke="#7a8288" stroke-width="0.8"/>
<path d="M0.5 1.5 L6 6.5 L11.5 1.5" stroke="#7a8288" stroke-width="0.8" fill="none"/>
<circle cx="9.5" cy="9.5" r="3" fill="#28a040"/><path d="M8 9.5h3M9.5 8v3" stroke="#fff" stroke-width="0.9"/></svg>
<svg class="a" style="left:685px;top:331px" width="13" height="13" viewBox="0 0 13 13">
<path d="M1 6.5 L6.5 1 L12 6 L12 12 L1 12Z" fill="#f0f0f0" stroke="#7a8288" stroke-width="0.7"/>
<path d="M0.5 7 L6.5 1 L12.5 6.5 L12.5 3.5 L7 0.5 L3 1.5Z" fill="#b83020"/><path d="M6.5 1 L12.5 6.5 L12 11 L7 12Z" fill="#c84030"/>
<rect x="3" y="8" width="2.5" height="4" fill="#a0a8b0"/></svg>

<div class="a" style="left:6px;top:723px;width:921px;height:1px;background:#505a68"></div>
<div class="a" style="left:6px;top:724px;width:921px;height:1px;background:#90a8c0"></div>
<div class="a" style="left:0;top:725px;width:933px;height:3px;background:#c8dcea"></div>
<div class="a" style="left:926px;top:89px;width:1px;height:635px;background:#5a6070"></div>
<div class="a" style="left:927px;top:89px;width:1px;height:636px;background:#9ab0c8"></div>
<div class="a" style="left:928px;top:89px;width:4px;height:636px;background:#b8dcf2"></div>
<div class="a" style="left:932px;top:68px;width:1px;height:660px;background:#0a1a28"></div>
<div id="taskbar" class="a"></div>
<div id="task1" class="a"></div>
</body></html>
